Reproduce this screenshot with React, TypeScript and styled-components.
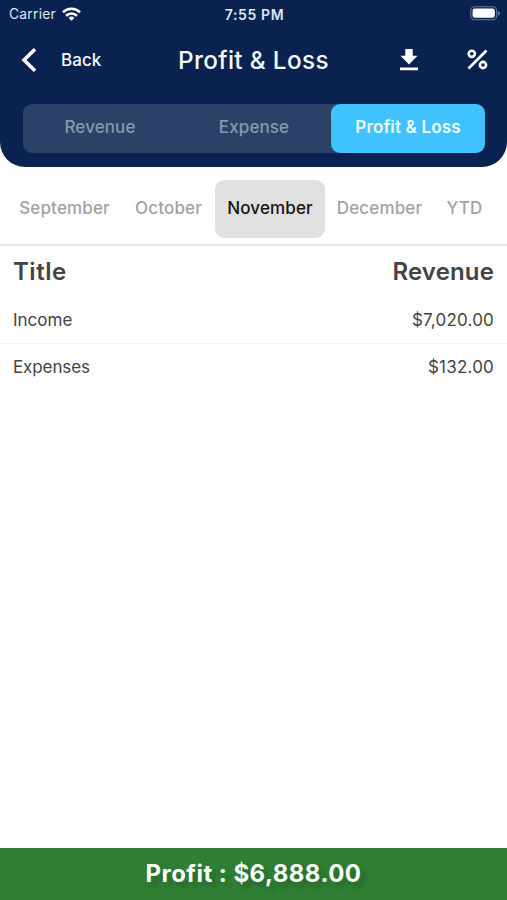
import React from "react";
import styled, { createGlobalStyle } from "styled-components";

const GlobalStyle = createGlobalStyle`
  * { box-sizing: border-box; }
  body {
    margin: 0;
    background: #fff;
    font-family: Inter, "Liberation Sans", sans-serif;
  }
  button { font: inherit; border: 0; padding: 0; background: none; color: inherit; }
`;

const Screen = styled.main`
  display: flex;
  flex-direction: column;
  width: 507px;
  height: 900px;
  overflow: hidden;
  background: #fff;
`;

const Header = styled.header`
  height: 167px;
  background: #0a224f;
  color: #f4f7fc;
  border-radius: 0 0 25px 25px;
`;

const Text = styled.span<{ $size: number; $weight?: number; $spacing?: number }>`
  font-size: ${(p) => p.$size}px;
  font-weight: ${(p) => p.$weight ?? 400};
  letter-spacing: ${(p) => p.$spacing ?? 0}px;
  white-space: nowrap;
`;

const StatusBar = styled.div`
  display: grid;
  grid-template-columns: 1fr auto 1fr;
  align-items: center;
  height: 28px;
  padding: 0 7px 0 9px;
  color: #dfe6f2;
`;

const Carrier = styled.div`
  display: flex;
  align-items: center;
  gap: 6px;
`;

const BatteryIcon = styled.svg`
  justify-self: end;
`;

const NavBar = styled.nav`
  display: grid;
  grid-template-columns: 178px 1fr auto;
  align-items: center;
  height: 63px;
  padding-right: 19px;
`;

const BackButton = styled.button`
  display: flex;
  align-items: center;
  gap: 24px;
  padding-left: 21px;
`;

const Actions = styled.div`
  display: flex;
  align-items: center;
  gap: 49px;

  svg { display: block; }
`;

const Segments = styled.div`
  display: grid;
  grid-template-columns: repeat(3, 1fr);
  height: 49px;
  margin: 12.5px 22px 0 23px;
  border-radius: 9px;
  background: #2c4168;
`;

const Segment = styled.button<{ $active?: boolean }>`
  padding-bottom: 3px;
  border-radius: 9px;
  background: ${(p) => (p.$active ? "#40c2ff" : "transparent")};
  color: ${(p) => (p.$active ? "#effaff" : "#8797b1")};
`;

const Months = styled.div`
  display: flex;
  align-items: center;
  height: 79px;
  padding: 6px 12px 0 7px;
  border-bottom: 2px solid #e6e6e6;
`;

const Month = styled.button<{ $active?: boolean; $width: number }>`
  flex: none;
  width: ${(p) => p.$width}px;
  height: 58px;
  padding-bottom: 2px;
  border-radius: 9px;
  background: ${(p) => (p.$active ? "#e0e0e0" : "transparent")};
  color: ${(p) => (p.$active ? "#161616" : "#a3a3a3")};
`;

const Row = styled.div<{ $height: number; $divided?: boolean }>`
  display: flex;
  align-items: center;
  justify-content: space-between;
  height: ${(p) => p.$height}px;
  padding: 0 13px;
  color: #444;
  border-bottom: ${(p) => (p.$divided ? "1px solid #f3f3f3" : "0")};
`;

const Footer = styled.footer`
  display: flex;
  align-items: center;
  justify-content: center;
  height: 52px;
  padding-bottom: 1px;
  margin-top: auto;
  background: #2f7e33;
  color: #f8fcf8;
  text-shadow: 5px 5px 5px rgba(0, 0, 0, 0.18);
`;

const SEGMENTS = [
  { label: "Revenue" },
  { label: "Expense" },
  { label: "Profit & Loss", active: true },
];

const MONTHS = [
  { label: "September", width: 115 },
  { label: "October", width: 93 },
  { label: "November", width: 110, active: true },
  { label: "December", width: 109 },
  { label: "YTD", width: 61 },
];

export default function App() {
  return (
    <>
      <GlobalStyle />
      <Screen>
        <Header>
          <StatusBar>
            <Carrier>
              <Text $size={13.8} $spacing={0.25}>Carrier</Text>
              <svg width="19" height="14" viewBox="0 0 19 14" fill="none" stroke="#fff" strokeWidth="2.6">
                <path d="M1 5.2a12.2 12.2 0 0 1 17 0" />
                <path d="M4.1 8.7a7.7 7.7 0 0 1 10.8 0" />
                <path d="M9.5 13.8 6.6 10.9a4.1 4.1 0 0 1 5.8 0Z" fill="#fff" stroke="none" />
              </svg>
            </Carrier>
            <Text $size={14} $weight={600} $spacing={0.6}>7:55 PM</Text>
            <BatteryIcon width="30" height="16" viewBox="0 0 30 16">
              <rect x="0.7" y="0.7" width="26" height="13" rx="4" fill="none" stroke="#66779a" strokeWidth="1.1" />
              <rect x="2.6" y="2.6" width="22.2" height="9.2" rx="2.2" fill="#fff" />
              <path d="M28 4.9c2.4.8 2.4 3.8 0 4.6Z" fill="#66779a" />
            </BatteryIcon>
          </StatusBar>
          <NavBar>
            <BackButton>
              <svg width="16" height="24" viewBox="0 0 16 24" fill="none" stroke="#fff" strokeWidth="3.5">
                <path d="M14 1.2 3 12l11 10.8" />
              </svg>
              <Text $size={17} $weight={500} $spacing={0.05}>Back</Text>
            </BackButton>
            <Text $size={24.3} $weight={500} $spacing={0.35}>Profit &amp; Loss</Text>
            <Actions>
              <svg width="18" height="22" viewBox="0 0 18 22" fill="#fff">
                <path d="M5.3 0h7.4v6.8h4.8L9 15.4.5 6.8h4.8ZM0 18.5h18v2.7H0Z" />
              </svg>
              <svg width="21" height="21" viewBox="0 0 21 21" fill="none" stroke="#fff" strokeWidth="2.6">
                <circle cx="4.8" cy="4.8" r="3.1" />
                <circle cx="16" cy="16" r="3.1" />
                <path d="M1.5 19.5 19.5 1.5" />
              </svg>
            </Actions>
          </NavBar>
          <Segments>
            {SEGMENTS.map((s) => (
              <Segment key={s.label} $active={s.active}>
                <Text $size={17} $weight={s.active ? 600 : 500} $spacing={s.active ? 0.15 : 0.1}>{s.label}</Text>
              </Segment>
            ))}
          </Segments>
        </Header>
        <Months>
          {MONTHS.map((m) => (
            <Month key={m.label} $active={m.active} $width={m.width}>
              <Text $size={17} $weight={500} $spacing={0.15}>{m.label}</Text>
            </Month>
          ))}
        </Months>
        <Row $height={51}>
          <Text $size={24} $weight={600} $spacing={0.5}>Title</Text>
          <Text $size={24} $weight={600} $spacing={0.15}>Revenue</Text>
        </Row>
        <Row $height={47} $divided>
          <Text $size={17}>Income</Text>
          <Text $size={17} $spacing={0.2}>$7,020.00</Text>
        </Row>
        <Row $height={46}>
          <Text $size={17} $spacing={-0.1}>Expenses</Text>
          <Text $size={17} $spacing={0.2}>$132.00</Text>
        </Row>
        <Footer>
          <Text $size={24} $weight={700} $spacing={0.45}>Profit : $6,888.00</Text>
        </Footer>
      </Screen>
    </>
  );
}
